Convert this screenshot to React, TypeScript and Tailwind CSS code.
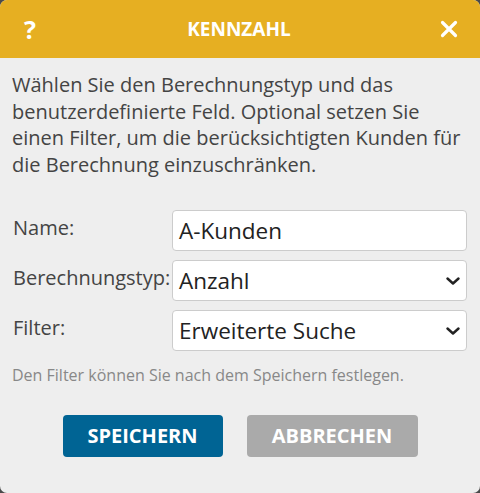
function Chevron() {
  return (
    <svg width="14" height="8" viewBox="0 0 14 8" className="shrink-0">
      <polyline points="1.5,1.5 7,6.5 12.5,1.5" fill="none" stroke="#222222" strokeWidth="2.4" strokeLinecap="round" strokeLinejoin="round" />
    </svg>
  )
}

export default function App() {
  return (
    <div className="w-[480px] h-[493px] bg-[#4a4a4a] font-['Open_Sans',sans-serif]">
      <div className="h-full rounded-[7px] overflow-hidden bg-[#eeeeee] flex flex-col">
        {/* Header */}
        <div className="h-[58px] shrink-0 bg-[#e6af22] flex items-center justify-between pl-[22px] pr-[22px] text-white">
          <span className="text-[25px] leading-none font-bold w-[16px] text-center">?</span>
          <span className="text-[19px] font-bold">KENNZAHL</span>
          <svg width="18" height="18" viewBox="0 0 18 18">
            <path d="M2.5 2.5 L15.5 15.5 M15.5 2.5 L2.5 15.5" stroke="white" strokeWidth="3.2" strokeLinecap="round" />
          </svg>
        </div>

        {/* Body */}
        <div className="px-[12px] pt-[14px] flex flex-col">
          <p className="text-[20px] leading-[26.5px] text-[#444444]">
            Wählen Sie den Berechnungstyp und das benutzerdefinierte Feld. Optional setzen Sie einen Filter, um die berücksichtigten Kunden für die Berechnung einzuschränken.
          </p>

          <div className="mt-[32px] flex flex-col gap-[9px] pr-[1px]">
            <div className="flex items-start">
              <label className="w-[160px] pl-[1px] pt-[3px] text-[20px] leading-[30px] text-[#444444]">Name:</label>
              <div className="flex-1 h-[41px] bg-white border border-[#cccccc] rounded-[4px] flex items-center px-[6px] text-[22.5px] text-[#222222]">
                A-Kunden
              </div>
            </div>
            <div className="flex items-start">
              <label className="w-[160px] pl-[1px] pt-[3px] text-[20px] leading-[30px] text-[#444444] whitespace-nowrap">Berechnungstyp:</label>
              <div className="flex-1 h-[41px] bg-white border border-[#cccccc] rounded-[4px] flex items-center justify-between pl-[6px] pr-[6px] text-[22.5px] text-[#222222]">
                <span>Anzahl</span>
                <Chevron />
              </div>
            </div>
            <div className="flex items-start">
              <label className="w-[160px] pl-[1px] pt-[3px] text-[20px] leading-[30px] text-[#444444]">Filter:</label>
              <div className="flex-1 h-[41px] bg-white border border-[#cccccc] rounded-[4px] flex items-center justify-between pl-[6px] pr-[6px] text-[22.5px] text-[#222222]">
                <span>Erweiterte Suche</span>
                <Chevron />
              </div>
            </div>
          </div>

          <p className="mt-[12px] text-[16px] leading-[24px] text-[#888888]">
            Den Filter können Sie nach dem Speichern festlegen.
          </p>

          <div className="mt-[28px] flex justify-center gap-[24px]">
            <button className="w-[160px] h-[42px] rounded-[4px] bg-[#006494] text-white text-[20px] font-bold">
              SPEICHERN
            </button>
            <button className="w-[171px] h-[42px] rounded-[4px] bg-[#aaaaaa] text-white text-[20px] font-bold">
              ABBRECHEN
            </button>
          </div>
        </div>
      </div>
    </div>
  )
}
